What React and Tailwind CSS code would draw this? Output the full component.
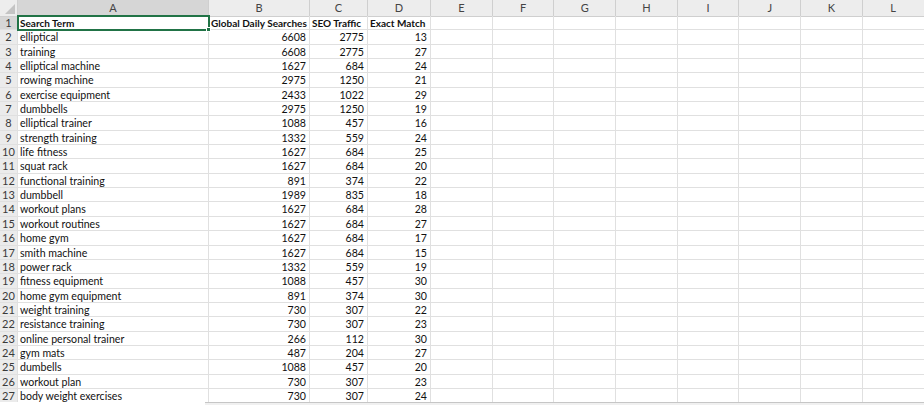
import React from "react";

const cols = ["A", "B", "C", "D", "E", "F", "G", "H", "I", "J", "K", "L"];

const rows = [
  ["elliptical", 6608, 2775, 13],
  ["training", 6608, 2775, 27],
  ["elliptical machine", 1627, 684, 24],
  ["rowing machine", 2975, 1250, 21],
  ["exercise equipment", 2433, 1022, 29],
  ["dumbbells", 2975, 1250, 19],
  ["elliptical trainer", 1088, 457, 16],
  ["strength training", 1332, 559, 24],
  ["life fitness", 1627, 684, 25],
  ["squat rack", 1627, 684, 20],
  ["functional training", 891, 374, 22],
  ["dumbbell", 1989, 835, 18],
  ["workout plans", 1627, 684, 28],
  ["workout routines", 1627, 684, 27],
  ["home gym", 1627, 684, 17],
  ["smith machine", 1627, 684, 15],
  ["power rack", 1332, 559, 19],
  ["fitness equipment", 1088, 457, 30],
  ["home gym equipment", 891, 374, 30],
  ["weight training", 730, 307, 22],
  ["resistance training", 730, 307, 23],
  ["online personal trainer", 266, 112, 30],
  ["gym mats", 487, 204, 27],
  ["dumbells", 1088, 457, 20],
  ["workout plan", 730, 307, 23],
  ["body weight exercises", 730, 307, 24],
];

const gridCols =
  "grid grid-cols-[18px_191px_101px_58px_63px_61.7px_61.7px_61.7px_61.7px_61.7px_61.7px_61.7px_61.7px]";

const cell = "border-r border-b border-[#e0e0e0] h-[14.35px] leading-[14px] whitespace-nowrap";

function Row({ n, values, header }) {
  return (
    <div className={gridCols}>
      <div
        className={`${cell} border-[#cfcfcf] text-center text-[#3a3a3a] text-[11px] ${
          header ? "bg-[#d6d6d6]" : "bg-[#ebebeb]"
        }`}
      >
        {n}
      </div>
      {cols.map((c, i) => {
        const v = values[i];
        const num = typeof v === "number";
        const selected = header && i === 0;
        return (
          <div
            key={c}
            className={`${cell} relative overflow-visible ${num ? "text-right pr-[3px]" : "pl-[2px]"} ${
              header ? "font-bold text-[10px]" : ""
            } ${selected ? "outline-2 outline-[#217346] -outline-offset-1" : ""}`}
          >
            {v}
            {selected && (
              <span className="absolute right-[-3px] bottom-[-3px] w-[5px] h-[5px] bg-[#217346] border border-white z-10" />
            )}
          </div>
        );
      })}
    </div>
  );
}

export default function App() {
  return (
    <div
      className="w-[924px] h-[405px] overflow-hidden bg-white text-[#111] text-[10.6px] flex flex-col"
      style={{ fontFamily: "Lato, 'Open Sans', 'Liberation Sans', sans-serif" }}
    >
      <div className="h-[402px] overflow-hidden">
        <div className={`${gridCols} h-[16px] bg-[#ededed] text-[#444] text-[11px]`}>
          <div className="border-r border-b border-[#cfcfcf] relative">
            <svg className="absolute right-[2px] bottom-[2px]" width="10" height="10" viewBox="0 0 10 10">
              <path d="M10 0 L10 10 L0 10 Z" fill="#c4c4c4" />
            </svg>
          </div>
          {cols.map((c, i) => (
            <div
              key={c}
              className={`border-r border-b border-[#cfcfcf] text-center leading-[15px] ${
                i === 0 ? "bg-[#d6d6d6] border-b-[#217346] border-b-2" : ""
              }`}
            >
              {c}
            </div>
          ))}
        </div>
        <Row n={1} header values={["Search Term", "Global Daily Searches", "SEO Traffic", "Exact Match"]} />
        {rows.map((r, i) => (
          <Row key={i} n={i + 2} values={r} />
        ))}
      </div>
      <div className="h-[3px] flex">
        <div className="w-[205px] bg-white" />
        <div className="flex-1 bg-[#f0f0f0] border-t border-[#c6c6c6]" />
      </div>
    </div>
  );
}
